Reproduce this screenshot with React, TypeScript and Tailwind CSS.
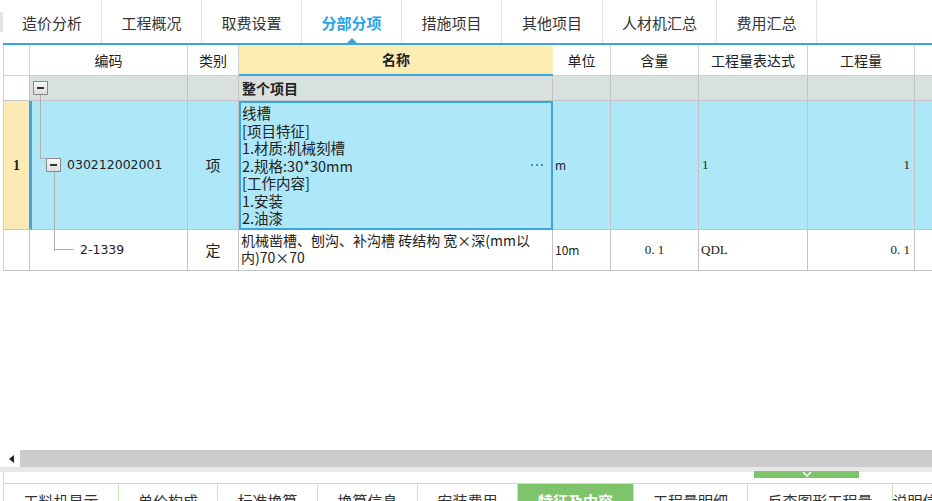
import React from "react";

const topTabs = [
  { t: "造价分析", w: "w-[99px]" },
  { t: "工程概况", w: "w-[100px]" },
  { t: "取费设置", w: "w-[100px]" },
  { t: "分部分项", w: "w-[100px]", active: true },
  { t: "措施项目", w: "w-[100px]" },
  { t: "其他项目", w: "w-[101px]" },
  { t: "人材机汇总", w: "w-[114px]" },
  { t: "费用汇总", w: "w-[100px]" },
];

const bottomTabs = [
  { t: "工料机显示", w: "w-[115px]" },
  { t: "单价构成", w: "w-[99px]" },
  { t: "标准换算", w: "w-[100px]" },
  { t: "换算信息", w: "w-[100px]" },
  { t: "安装费用", w: "w-[100px]" },
  { t: "特征及内容", w: "w-[116px]", active: true },
  { t: "工程量明细", w: "w-[114px]" },
  { t: "反查图形工程量", w: "w-[145px]" },
  { t: "说明信息", w: "w-[60px]" },
];

const C0 = "w-[26px] shrink-0";
const C1 = "w-[158px] shrink-0";
const C2 = "w-[51px] shrink-0";
const C3 = "w-[314px] shrink-0";
const C4 = "w-[58px] shrink-0";
const C5 = "w-[88px] shrink-0";
const C6 = "w-[109px] shrink-0";
const C7 = "w-[107px] shrink-0";
const C8 = "flex-1 min-w-0";

const cell = "border-r border-b border-[#c4c4c4]";
const num = "font-['Liberation_Serif',serif] text-[13px]";
const code = "font-['DejaVu_Sans',sans-serif] text-[12.5px]";

function Minus({ className = "" }: { className?: string }) {
  return (
    <div
      className={
        "w-[15px] h-[14px] border border-[#8a8a8a] bg-gradient-to-b from-[#fafafa] to-[#dcdcdc] flex items-center justify-center " +
        className
      }
    >
      <div className="w-[7px] h-[2px] bg-[#333]" />
    </div>
  );
}

export default function App() {
  return (
    <div className="w-[932px] h-[501px] bg-white overflow-hidden relative font-['Noto_Sans_CJK_SC','Noto_Sans',sans-serif]">
      {/* top tabs */}
      <div className="h-[43px] flex pl-[3px] relative">
        <div className="absolute left-0 top-[12px] w-[3px] h-[20px] bg-[#e4e4e4]" />
        {topTabs.map((t) => (
          <div
            key={t.t}
            className={"h-full flex items-center justify-center pt-[4px] border-r border-[#e3e3e3] relative shrink-0 " + t.w}
          >
            <span className={"text-[15px] " + (t.active ? "text-[#2aa2e6] font-bold" : "text-[#333]")}>
              {t.t}
            </span>
            {t.active && (
              <div className="absolute bottom-0 left-1/2 -translate-x-1/2 w-0 h-0 border-l-[5px] border-r-[5px] border-b-[5px] border-l-transparent border-r-transparent border-b-[#3aa6df]" />
            )}
          </div>
        ))}
      </div>
      <div className="h-[2px] bg-[#3aa6df] ml-[3px]" />

      {/* table */}
      <div className="ml-[3px] border-l border-[#cfcfcf] text-[#222]">
        {/* header */}
        <div className="flex h-[31px] text-[14px]">
          <div className={"border-r border-b border-[#d0d0d0] " + C0} />
          <div className={"border-r border-b border-[#d0d0d0] flex items-center justify-center " + C1}>编码</div>
          <div className={"border-r border-b border-[#d0d0d0] flex items-center justify-center " + C2}>类别</div>
          <div className={"border-b-2 border-[#3aa6df] bg-[#fdedb3] flex items-center justify-center font-bold " + C3}>名称</div>
          <div className={"border-r border-b border-[#d0d0d0] flex items-center justify-center " + C4}>单位</div>
          <div className={"border-r border-b border-[#d0d0d0] flex items-center justify-center " + C5}>含量</div>
          <div className={"border-r border-b border-[#d0d0d0] flex items-center justify-center " + C6}>工程量表达式</div>
          <div className={"border-r border-b border-[#d0d0d0] flex items-center justify-center " + C7}>工程量</div>
          <div className={"border-b border-[#d0d0d0] " + C8} />
        </div>
        {/* 整个项目 */}
        <div className="flex h-[25px] text-[14px] bg-[#d9e1de]">
          <div className={cell + " bg-white " + C0} />
          <div className={cell + " flex items-center pl-[3px] " + C1}>
            <Minus />
          </div>
          <div className={cell + " " + C2} />
          <div className={cell + " flex items-center pl-[3px] font-bold " + C3}>整个项目</div>
          <div className={cell + " " + C4} />
          <div className={cell + " " + C5} />
          <div className={cell + " " + C6} />
          <div className={cell + " " + C7} />
          <div className={"border-b border-[#c4c4c4] " + C8} />
        </div>
        {/* row 1 */}
        <div className="flex h-[129px] text-[13px] bg-[#aee8f8]">
          <div className="w-[28px] shrink-0 border-r-[3px] border-r-[#3aa6df] border-b border-[#c4c4c4] bg-[#fde9b3] flex items-center justify-center font-bold font-['Liberation_Serif',serif] text-[14px]">1</div>
          <div className="border-r border-b border-[#c4c4c4] relative flex items-center w-[156px] shrink-0">
            <div className="absolute left-[8px] top-[-6px] w-px h-[64px] bg-[#b0b0b0]" />
            <div className="absolute left-[8px] top-[57px] w-[8px] h-px bg-[#b0b0b0]" />
            <div className="absolute left-[22px] top-[70px] w-px h-[80px] bg-[#b0b0b0] z-10" />
            <Minus className="ml-[14px] relative z-10" />
            <span className={"ml-[6px] " + code}>030212002001</span>
          </div>
          <div className={cell + " flex items-center justify-center text-[15px] " + C2}>项</div>
          <div className={"border-2 border-[#3aa6df] relative pl-[1px] pt-[1px] leading-[17.5px] text-[14.5px] " + C3}>
            <div>线槽</div>
            <div>[项目特征]</div>
            <div>1.材质:机械刻槽</div>
            <div>2.规格:30*30mm</div>
            <div>[工作内容]</div>
            <div>1.安装</div>
            <div>2.油漆</div>
            <div className="absolute right-[8px] top-[61px] flex gap-[3px]">
              <div className="w-[2px] h-[2px] bg-[#3a8ee6]" />
              <div className="w-[2px] h-[2px] bg-[#3a8ee6]" />
              <div className="w-[2px] h-[2px] bg-[#3a8ee6]" />
            </div>
          </div>
          <div className={cell + " flex items-center pl-[2px] text-[12px] " + C4}>m</div>
          <div className={cell + " " + C5} />
          <div className={cell + " flex items-center pl-[3px] " + num + " " + C6}>1</div>
          <div className={cell + " flex items-center justify-end pr-[4px] " + num + " " + C7}>1</div>
          <div className={"border-b border-[#c4c4c4] " + C8} />
        </div>
        {/* row 2 */}
        <div className="flex h-[41px] text-[13px]">
          <div className={cell + " " + C0} />
          <div className={cell + " relative flex items-center " + C1}>
            <div className="absolute left-[24px] top-[19px] w-[20px] h-px bg-[#b0b0b0]" />
            <span className={"ml-[50px] " + code}>2-1339</span>
          </div>
          <div className={cell + " flex items-center justify-center text-[15px] " + C2}>定</div>
          <div className={cell + " pl-[2px] pt-[2px] leading-[17px] text-[14px] overflow-hidden whitespace-nowrap " + C3}>
            <div>机械凿槽、刨沟、补沟槽 砖结构 宽×深(mm以</div>
            <div>内)70×70</div>
          </div>
          <div className={cell + " flex items-center pl-[2px] text-[12px] " + C4}>10m</div>
          <div className={cell + " flex items-center justify-center " + num + " " + C5}>0. 1</div>
          <div className={cell + " flex items-center pl-[2px] " + num + " " + C6}>QDL</div>
          <div className={cell + " flex items-center justify-end pr-[4px] " + num + " " + C7}>0. 1</div>
          <div className={"border-b border-[#c4c4c4] " + C8} />
        </div>
      </div>

      {/* empty area */}
      <div className="h-[179px]" />

      {/* scrollbar */}
      <div className="h-[17px] bg-[#cccccc] ml-[3px] flex">
        <div className="w-[17px] h-full bg-white flex items-center justify-center">
          <div className="w-0 h-0 border-t-[4px] border-b-[4px] border-r-[5px] border-t-transparent border-b-transparent border-r-[#222]" />
        </div>
      </div>
      <div className="h-[5px] bg-[#e8e8e8]" />
      <div className="h-[11px] bg-white relative ml-[3px] border-l border-[#d8d8d8]">
        <div className="absolute left-[750px] top-[-1px] w-[105px] h-[7px] bg-[#7dc46a] flex justify-center">
          <svg width="10" height="6" viewBox="0 0 10 6">
            <path d="M1 1 L5 5 L9 1" stroke="white" strokeWidth="1.6" fill="none" />
          </svg>
        </div>
      </div>
      <div className="h-px bg-[#bfe5b3] ml-[3px]" />
      <div className="flex ml-[3px] h-[30px] border-l border-[#d8d8d8]">
        {bottomTabs.map((t) => (
          <div
            key={t.t}
            className={
              "h-full flex justify-center pt-[6px] border-r border-[#c4e6b8] text-[15px] whitespace-nowrap overflow-hidden shrink-0 " +
              t.w +
              (t.active ? " bg-[#7dc46a] text-white font-bold" : " text-[#333]")
            }
          >
            {t.t}
          </div>
        ))}
      </div>
    </div>
  );
}
